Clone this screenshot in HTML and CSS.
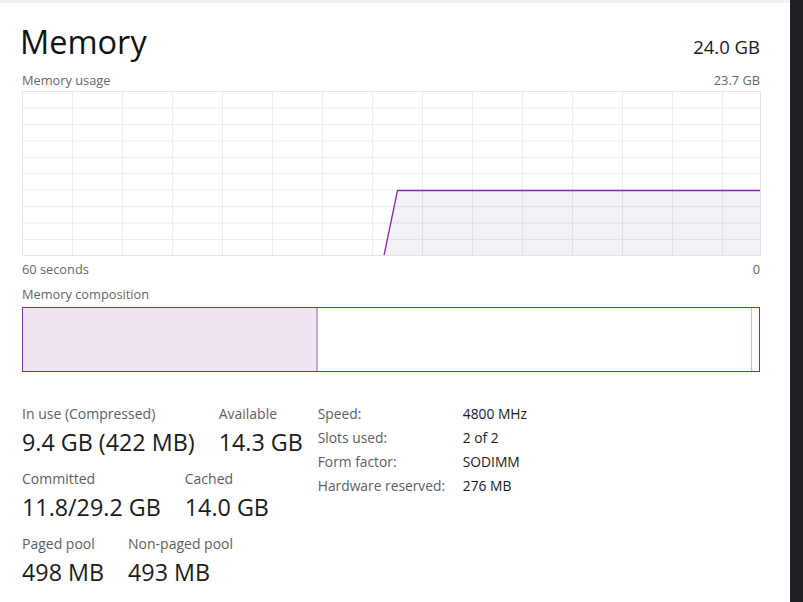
FILE: index.html
```html
<!DOCTYPE html>
<html lang="en">
<head>
  <meta charset="UTF-8">
  <title>Memory</title>
  <link rel="stylesheet" href="styles.css">
</head>
<body>
  <div class="window">
    <main class="panel">
      <header class="head">
        <h1 class="title">Memory</h1>
        <div class="total">24.0 GB</div>
      </header>

      <div class="caption">
        <span>Memory usage</span>
        <span>23.7 GB</span>
      </div>
      <svg class="graph" width="739" height="165" viewBox="0 0 739 165">
        <g stroke="#ececec" stroke-width="1">
          <line x1="50.5" y1="0" x2="50.5" y2="165"/>
          <line x1="100.5" y1="0" x2="100.5" y2="165"/>
          <line x1="150.5" y1="0" x2="150.5" y2="165"/>
          <line x1="200.5" y1="0" x2="200.5" y2="165"/>
          <line x1="250.5" y1="0" x2="250.5" y2="165"/>
          <line x1="300.5" y1="0" x2="300.5" y2="165"/>
          <line x1="350.5" y1="0" x2="350.5" y2="165"/>
          <line x1="400.5" y1="0" x2="400.5" y2="165"/>
          <line x1="450.5" y1="0" x2="450.5" y2="165"/>
          <line x1="500.5" y1="0" x2="500.5" y2="165"/>
          <line x1="550.5" y1="0" x2="550.5" y2="165"/>
          <line x1="600.5" y1="0" x2="600.5" y2="165"/>
          <line x1="650.5" y1="0" x2="650.5" y2="165"/>
          <line x1="700.5" y1="0" x2="700.5" y2="165"/>
          <line x1="0" y1="17" x2="739" y2="17"/>
          <line x1="0" y1="33.5" x2="739" y2="33.5"/>
          <line x1="0" y1="50" x2="739" y2="50"/>
          <line x1="0" y1="66.5" x2="739" y2="66.5"/>
          <line x1="0" y1="82.5" x2="739" y2="82.5"/>
          <line x1="0" y1="99" x2="739" y2="99"/>
          <line x1="0" y1="115.5" x2="739" y2="115.5"/>
          <line x1="0" y1="132" x2="739" y2="132"/>
          <line x1="0" y1="148.5" x2="739" y2="148.5"/>
        </g>
        <polygon points="362,164.5 375.5,99.5 738,99.5 738,164.5" fill="#6a4f80" fill-opacity="0.08"/>
        <polyline points="362,164.5 375.5,99.5 738,99.5" fill="none" stroke="#8b2aa8" stroke-width="1.3"/>
        <rect x="0.5" y="0.5" width="738" height="164" fill="none" stroke="#e4e4e4"/>
      </svg>
      <div class="caption axis">
        <span>60 seconds</span>
        <span>0</span>
      </div>

      <div class="caption comp-label">Memory composition</div>
      <div class="composition">
        <div class="seg in-use" style="width: 295px"></div>
        <div class="seg standby"></div>
        <div class="seg free" style="width: 8px"></div>
      </div>

      <section class="stats">
        <div class="stat-rows">
          <div class="stat-row">
            <div class="stat">
              <div class="stat-label">In use (Compressed)</div>
              <div class="stat-value">9.4 GB (422 MB)</div>
            </div>
            <div class="stat">
              <div class="stat-label">Available</div>
              <div class="stat-value">14.3 GB</div>
            </div>
          </div>
          <div class="stat-row">
            <div class="stat">
              <div class="stat-label">Committed</div>
              <div class="stat-value">11.8/29.2 GB</div>
            </div>
            <div class="stat">
              <div class="stat-label">Cached</div>
              <div class="stat-value">14.0 GB</div>
            </div>
          </div>
          <div class="stat-row">
            <div class="stat">
              <div class="stat-label">Paged pool</div>
              <div class="stat-value">498 MB</div>
            </div>
            <div class="stat">
              <div class="stat-label">Non-paged pool</div>
              <div class="stat-value">493 MB</div>
            </div>
          </div>
        </div>

        <dl class="props">
          <dt>Speed:</dt><dd>4800 MHz</dd>
          <dt>Slots used:</dt><dd>2 of 2</dd>
          <dt>Form factor:</dt><dd>SODIMM</dd>
          <dt>Hardware reserved:</dt><dd>276 MB</dd>
        </dl>
      </section>
    </main>
    <div class="edge"></div>
  </div>
</body>
</html>
```

FILE: styles.css
```css
* {
  margin: 0;
  padding: 0;
  box-sizing: border-box;
}
html, body {
  height: 100%;
}
body {
  font-family: 'Open Sans', 'Noto Sans', sans-serif;
  background: #ffffff;
  color: #1b1b1b;
  overflow: hidden;
}
.window {
  display: flex;
  height: 100%;
}
.panel {
  width: 790px;
  flex-shrink: 0;
  border-top: 3px solid #f0f0f0;
  padding: 19px 30px 0 22px;
}
.edge {
  flex: 1;
  background: #1f2023;
}
.head {
  display: flex;
  align-items: baseline;
  justify-content: space-between;
}
.title {
  font-size: 32.5px;
  font-weight: 400;
  line-height: 40px;
  margin-left: -2px;
  color: #111;
}
.total {
  font-size: 18.5px;
  line-height: 24px;
}
.caption {
  display: flex;
  justify-content: space-between;
  font-size: 12.8px;
  line-height: 18px;
  color: #666;
}
.head + .caption {
  margin-top: 9px;
  margin-bottom: 2px;
}
.graph {
  display: block;
}
.axis {
  margin-top: 4px;
}
.comp-label {
  margin-top: 7px;
}
.composition {
  display: flex;
  height: 65px;
  margin-top: 4px;
  border: 1px solid #8b2aa8;
}
.seg {
  height: 100%;
}
.in-use {
  background: #efe4f2;
  border-right: 2px solid #c9a7d8;
}
.standby {
  flex: 1;
}
.free {
  border-left: 1px solid #cdb6d6;
}
.stats {
  display: flex;
  align-items: flex-start;
  margin-top: 32px;
}
.stat-rows {
  display: flex;
  flex-direction: column;
  gap: 12px;
}
.stat-row {
  display: flex;
  gap: 24px;
}
.stat-label {
  font-size: 14px;
  line-height: 19px;
  color: #5e5e5e;
}
.stat-value {
  font-size: 23.3px;
  line-height: 30px;
  margin-top: 4px;
}
.props {
  display: grid;
  grid-template-columns: 145px auto;
  margin-top: -2px;
  margin-left: 15px;
  font-size: 13.8px;
  line-height: 24px;
}
.props dt {
  color: #5e5e5e;
}
```
